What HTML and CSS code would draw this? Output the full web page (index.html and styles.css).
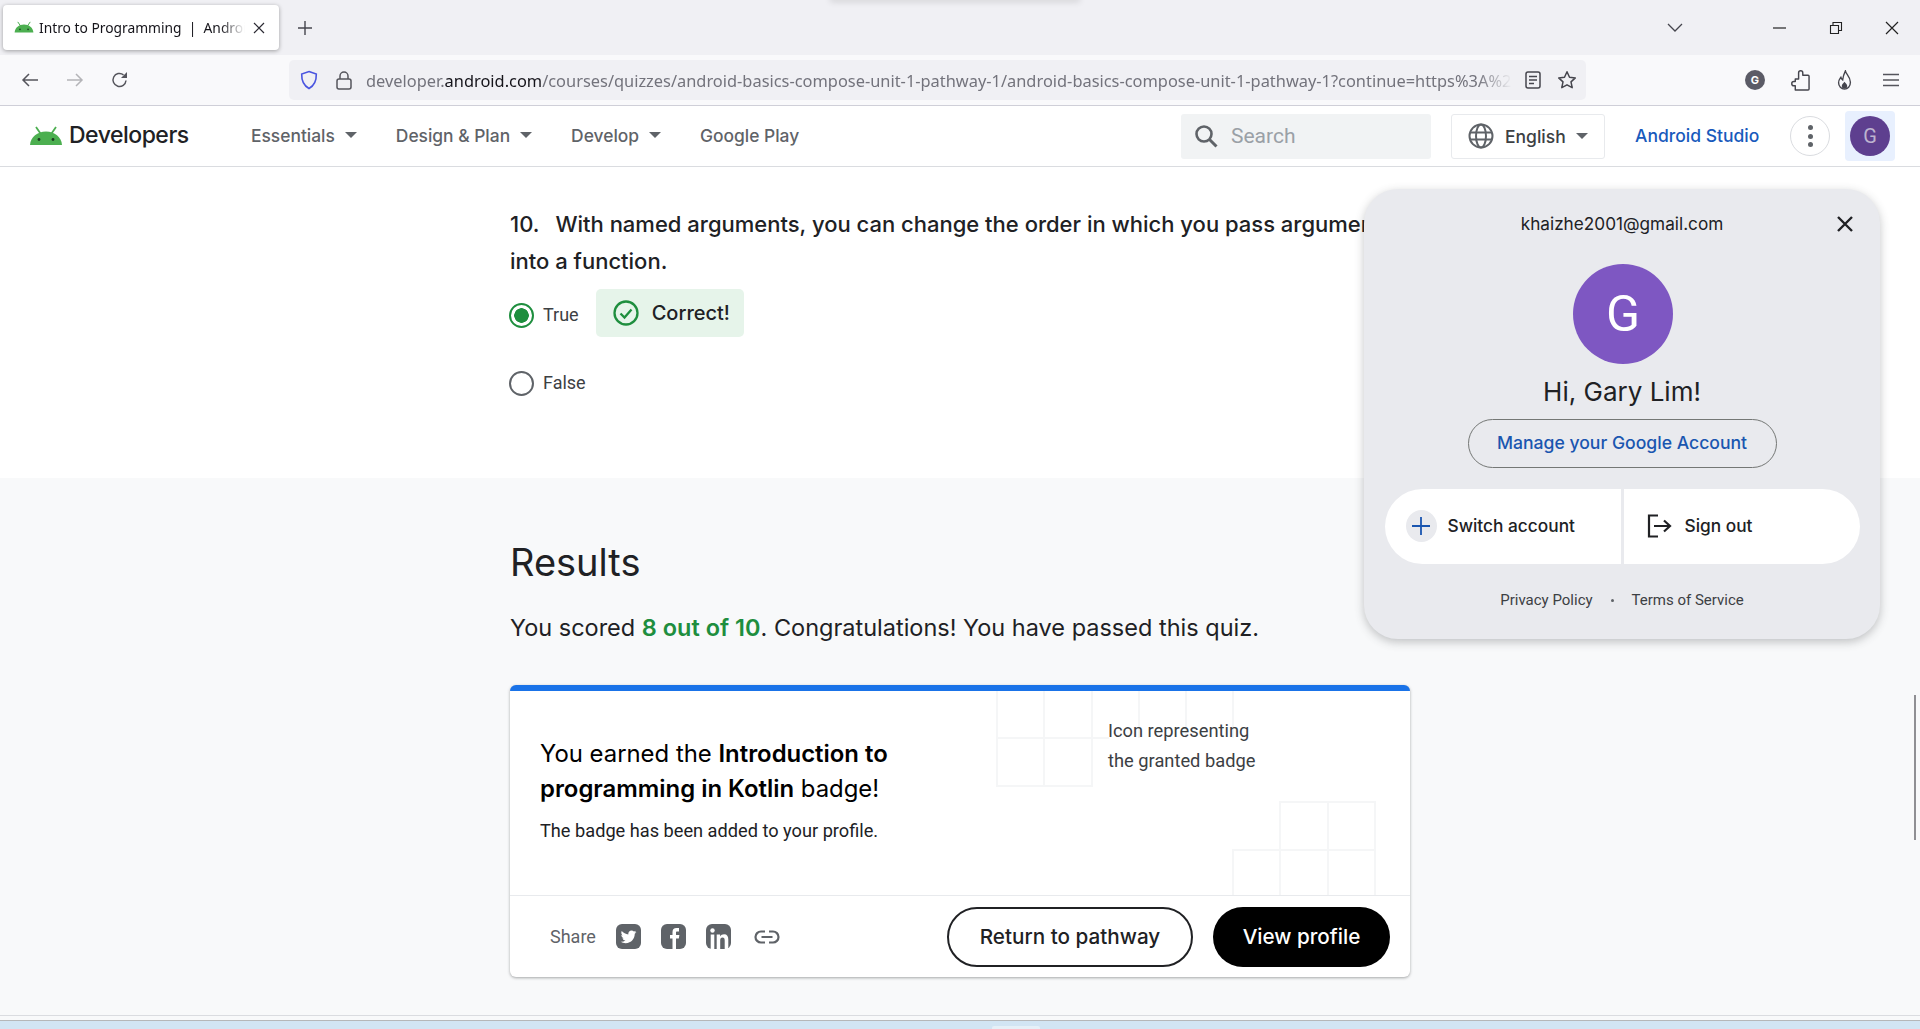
FILE: index.html
```html
<!DOCTYPE html>
<html lang="en">
<head>
    <meta charset="UTF-8">
    <title>Intro to Programming | Android Developers</title>
    <link rel="stylesheet" href="styles.css">
</head>
<body>
    <div class="tabbar">
        <div class="tab">
            <svg class="tab-icon" viewBox="0 0 32 20"><path d="M6 1l4.500 6.500M26 1l-4.500 6.500" stroke="#4caf50" stroke-width="1.600" fill="none"/><path d="M1 18C1.500 10 8 5 16 5s14.500 5 15 13z" fill="#4caf50"/><circle cx="9.500" cy="13" r="1.300" fill="#1b3a20"/><circle cx="22.500" cy="13" r="1.300" fill="#1b3a20"/></svg>
            <span class="tab-title">Intro to Programming&nbsp; |&nbsp; Android Developers</span>
            <svg class="tab-close" viewBox="0 0 12 12"><path d="M1 1l10 10M11 1L1 11" stroke="#2b2a33" stroke-width="1.200"/></svg>
        </div>
        <svg class="new-tab" viewBox="0 0 16 16"><path d="M8 1v14M1 8h14" stroke="#45454d" stroke-width="1.400"/></svg>
        <div class="tabbar-spacer"></div>
        <svg class="tab-list" viewBox="0 0 16 10"><path d="M1 1l7 7 7-7" stroke="#45454d" stroke-width="1.300" fill="none"/></svg>
        <div class="win-btn"><svg viewBox="0 0 14 14"><path d="M0 7h13" stroke="#222" stroke-width="1.200"/></svg></div>
        <div class="win-btn"><svg viewBox="0 0 14 14"><path d="M1.500 4.500h8v8h-8zM4 4.500V1.500h8.500v8h-3" stroke="#222" stroke-width="1.100" fill="none"/></svg></div>
        <div class="win-btn"><svg viewBox="0 0 14 14"><path d="M1 1l12 12M13 1L1 13" stroke="#222" stroke-width="1.200"/></svg></div>
    </div>

    <div class="toolbar">
        <svg class="nav-btn" viewBox="0 0 18 16"><path d="M17 8H2M8 2L2 8l6 6" stroke="#55555c" stroke-width="1.500" fill="none"/></svg>
        <svg class="nav-btn" viewBox="0 0 18 16"><path d="M1 8h15M10 2l6 6-6 6" stroke="#b4b4b8" stroke-width="1.500" fill="none"/></svg>
        <svg class="nav-btn" viewBox="0 0 18 18"><path d="M15 9.500A6.500 6.500 0 1 1 12.500 3.800" stroke="#55555c" stroke-width="1.500" fill="none"/><path d="M16 1v6h-6z" fill="#55555c"/></svg>
        <div class="urlbar">
            <svg class="shield" viewBox="0 0 18 20"><path d="M9 1.500l7.300 2.500c.2 6.500-1.800 11.500-7.300 14.500C3.500 15.500 1.500 10.500 1.700 4z" stroke="#4a55e0" stroke-width="1.600" fill="none"/></svg>
            <svg class="lock" viewBox="0 0 16 20"><path d="M4 9V6a4 4 0 0 1 8 0v3" stroke="#55555c" stroke-width="1.500" fill="none"/><rect x="1" y="9" width="14" height="10" rx="2" stroke="#55555c" stroke-width="1.500" fill="none"/></svg>
            <div class="url"><span class="url-dim">developer.</span>android.com<span class="url-dim">/courses/quizzes/android-basics-compose-unit-1-pathway-1/android-basics-compose-unit-1-pathway-1?continue=https%3A%2F%2Fdeveloper.android.com</span></div>
            <svg class="reader" viewBox="0 0 16 18"><rect x="1" y="1" width="14" height="16" rx="2" stroke="#45454d" stroke-width="1.500" fill="none"/><path d="M4 5.500h8M4 9h8M4 12.500h5" stroke="#45454d" stroke-width="1.400"/></svg>
            <svg class="star" viewBox="0 0 20 20"><path d="M10 1.800l2.500 5.400 5.800.7-4.300 4 1.200 5.800L10 14.800l-5.200 2.900L6 11.900l-4.300-4 5.800-.7z" stroke="#45454d" stroke-width="1.500" fill="none" stroke-linejoin="round"/></svg>
        </div>
        <div class="ext-badge">G</div>
        <svg class="ext-puzzle" viewBox="0 0 20 22"><path d="M8 5.500V3a2.200 2.200 0 0 1 4.400 0v2.500H18a1 1 0 0 1 1 1V20a1 1 0 0 1-1 1H4.500v-4.500H3a2.200 2.200 0 0 1 0-4.400h1.500V9.500H8z" stroke="#45454d" stroke-width="1.500" fill="none" stroke-linejoin="round"/></svg>
        <svg class="ext-flame" viewBox="0 0 16 22"><path d="M9 1c.5 3.500 5.500 6 5.500 12.500C14.500 18 11.500 21 8 21s-6.500-3-6.500-7c0-3 1.500-4.500 2.500-6 .5 1.500 1 2.300 2 3C6.500 7 7.500 4 9 1z" stroke="#45454d" stroke-width="1.500" fill="none"/><path d="M8 13c1 1.500 3 2.500 3 4.500a3 3 0 0 1-6 0c0-2 2-3 3-4.500z" fill="#45454d"/></svg>
        <svg class="menu" viewBox="0 0 16 14"><path d="M0 1.500h16M0 7h16M0 12.500h16" stroke="#55555c" stroke-width="1.500"/></svg>
    </div>

    <header class="site-header">
        <svg class="logo" viewBox="0 0 32 20"><path d="M6 1l4.500 6.500M26 1l-4.500 6.500" stroke="#4caf50" stroke-width="1.800" fill="none"/><path d="M0 19C.5 11 7.500 5.500 16 5.500S31.500 11 32 19z" fill="#4caf50"/><circle cx="9" cy="13.500" r="1.400" fill="#1b3a20"/><circle cx="23" cy="13.500" r="1.400" fill="#1b3a20"/></svg>
        <div class="brand">Developers</div>
        <nav class="site-nav">
            <a class="nav-link">Essentials<i class="caret"></i></a>
            <a class="nav-link">Design &amp; Plan<i class="caret"></i></a>
            <a class="nav-link">Develop<i class="caret"></i></a>
            <a class="nav-link">Google Play</a>
        </nav>
        <div class="search">
            <svg viewBox="0 0 24 24"><circle cx="10" cy="10" r="7.500" stroke="#5f6368" stroke-width="2.600" fill="none"/><path d="M15.500 15.500l7 7" stroke="#5f6368" stroke-width="3"/></svg>
            <span>Search</span>
        </div>
        <div class="lang">
            <svg viewBox="0 0 26 26"><circle cx="13" cy="13" r="11.500" stroke="#5f6368" stroke-width="2" fill="none"/><ellipse cx="13" cy="13" rx="5" ry="11.500" stroke="#5f6368" stroke-width="2" fill="none"/><path d="M2 9.500h22M2 16.500h22" stroke="#5f6368" stroke-width="2"/></svg>
            <span>English</span><i class="caret"></i>
        </div>
        <a class="studio">Android Studio</a>
        <div class="more"><i></i><i></i><i></i></div>
        <div class="user-wrap"><div class="user">G</div></div>
    </header>

    <main class="page">
        <section class="quiz">
            <p class="question"><span class="q-num">10.</span>With named arguments, you can change the order in which you pass arguments<br>into a function.</p>
            <div class="option">
                <span class="radio radio-on"></span>
                <span class="option-label">True</span>
                <div class="feedback">
                    <svg viewBox="0 0 26 26"><circle cx="13" cy="13" r="11.500" stroke="#1e8e3e" stroke-width="2.300" fill="none"/><path d="M7.500 13.500l4 4 7-8" stroke="#1e8e3e" stroke-width="2.300" fill="none"/></svg>
                    <span>Correct!</span>
                </div>
            </div>
            <div class="option option-last">
                <span class="radio"></span>
                <span class="option-label">False</span>
            </div>
        </section>

        <section class="results">
            <h1>Results</h1>
            <p class="score">You scored <b>8 out of 10</b>. Congratulations! You have passed this quiz.</p>
            <div class="card">
                <svg class="card-grid" viewBox="0 0 900 205">
                    <path d="M487 0v95h95V0M534 0v95M487 47h112M629 0v47M676 0v47M723 0v47"/>
                    <path d="M723 205V159H865M770 205V111H865V205M818 111V205"/>
                </svg>
                <div class="card-body">
                    <div class="card-text">
                        <h2>You earned the <b>Introduction to programming in Kotlin</b> badge!</h2>
                        <p>The badge has been added to your profile.</p>
                    </div>
                    <div class="badge-alt">Icon representing<br>the granted badge</div>
                </div>
                <div class="card-foot">
                    <span class="share">Share</span>
                    <svg class="share-icon" viewBox="0 0 25 25"><rect width="25" height="25" rx="6" fill="#5f6368"/><path transform="translate(3.500 3.500) scale(.75)" d="M22.460 6c-.77.35-1.600.58-2.460.69.88-.53 1.560-1.370 1.880-2.380-.83.5-1.750.85-2.720 1.050C18.370 4.500 17.260 4 16 4c-2.350 0-4.270 1.920-4.270 4.290 0 .34.04.67.11.98C8.280 9.090 5.110 7.380 3 4.790c-.37.63-.58 1.370-.58 2.150 0 1.490.75 2.810 1.910 3.560-.71 0-1.370-.2-1.950-.5v.03c0 2.080 1.480 3.820 3.440 4.210a4.220 4.220 0 0 1-1.930.07 4.280 4.280 0 0 0 4 2.980 8.520 8.520 0 0 1-5.330 1.840c-.34 0-.68-.02-1.020-.06C3.440 20.290 5.700 21 8.120 21 16 21 20.330 14.460 20.330 8.790c0-.19 0-.37-.01-.56.84-.6 1.560-1.360 2.140-2.230z" fill="#fff"/></svg>
                    <svg class="share-icon" viewBox="0 0 25 25"><rect width="25" height="25" rx="6" fill="#5f6368"/><path d="M18 4h-2.500A4 4 0 0 0 11.500 8v3H9v3.500h2.500V25H15V14.500h2.800l.6-3.500H15V8.500c0-.7.4-1 1-1h2z" fill="#fff"/></svg>
                    <svg class="share-icon" viewBox="0 0 25 25"><rect width="25" height="25" rx="6" fill="#5f6368"/><circle cx="6.500" cy="6.500" r="2.200" fill="#fff"/><path d="M4.700 10.500h3.600V25H4.700zM10.700 10.500h3.400v2c.8-1.400 2.200-2.300 4-2.300 3 0 4.200 2 4.200 5.300V25h-3.600v-8.500c0-1.800-.6-3-2.200-3-1.700 0-2.300 1.300-2.300 3V25h-3.500z" fill="#fff"/></svg>
                    <svg class="link-icon" viewBox="0 0 26 14"><path d="M11 1.500H7a5.500 5.500 0 0 0 0 11h4M15 1.500h4a5.500 5.500 0 0 1 0 11h-4M7.500 7h11" stroke="#5f6368" stroke-width="2.200" fill="none"/></svg>
                    <div class="foot-spacer"></div>
                    <a class="btn btn-outline">Return to pathway</a>
                    <a class="btn btn-dark">View profile</a>
                </div>
            </div>
        </section>
    </main>

    <div class="page-end"></div>
    <div class="taskbar"><span class="task-tab"></span></div>

    <aside class="account">
        <div class="account-mail">khaizhe2001@gmail.com</div>
        <svg class="account-close" viewBox="0 0 18 18"><path d="M2 2l14 14M16 2L2 16" stroke="#202124" stroke-width="2.400"/></svg>
        <div class="account-avatar">G</div>
        <div class="account-hi">Hi, Gary Lim!</div>
        <a class="account-manage">Manage your Google Account</a>
        <div class="account-actions">
            <a class="action action-left">
                <span class="plus"><svg viewBox="0 0 18 18"><path d="M9 0v18M0 9h18" stroke="#1a56b0" stroke-width="1.800"/></svg></span>
                Switch account
            </a>
            <a class="action action-right">
                <svg class="signout" viewBox="0 0 25 24"><path d="M11 1.500H2v21h9" stroke="#202124" stroke-width="2.200" fill="none"/><path d="M7 12h16M17 6.500l6 5.500-6 5.500" stroke="#202124" stroke-width="2.200" fill="none"/></svg>
                Sign out
            </a>
        </div>
        <div class="account-foot">
            <a>Privacy Policy</a><i></i><a>Terms of Service</a>
        </div>
    </aside>

    <div class="scroll-thumb"></div>
</body>
</html>
```
FILE: styles.css
```css
* {
    box-sizing: border-box;
}
body {
    margin: 0;
    width: 1920px;
    height: 1029px;
    overflow: hidden;
    display: flex;
    flex-direction: column;
    position: relative;
    font-family: Inter, "Liberation Sans", sans-serif;
    color: #202124;
    background-color: #fff;
}
svg {
    display: block;
    flex-shrink: 0;
}

/* browser tab strip */
.tabbar {
    position: relative;
    height: 55px;
    display: flex;
    align-items: center;
    padding-left: 3px;
    background-color: #f0f0f4;
}
.tabbar::before {
    content: "";
    position: absolute;
    left: 830px;
    top: -6px;
    width: 250px;
    height: 6px;
    box-shadow: 0 2px 6px rgba(0, 0, 0, 0.12);
}
.tab {
    width: 276px;
    height: 45px;
    display: flex;
    align-items: center;
    padding-left: 11px;
    background-color: #fff;
    border-radius: 4px;
    box-shadow: 0 1px 4px rgba(0, 0, 0, 0.35);
}
.tab-icon {
    width: 20px;
    height: 13px;
}
.tab-title {
    width: 206px;
    margin-left: 5px;
    overflow: hidden;
    white-space: nowrap;
    font-family: "Noto Sans", sans-serif;
    font-size: 13.800px;
    color: #15141a;
    -webkit-mask-image: linear-gradient(to right, #000 88%, transparent);
    mask-image: linear-gradient(to right, #000 88%, transparent);
}
.tab-close {
    width: 12px;
    height: 12px;
    margin-left: 8px;
}
.new-tab {
    width: 16px;
    height: 16px;
    margin-left: 18px;
}
.tabbar-spacer {
    flex: 1;
}
.tab-list {
    width: 16px;
    height: 10px;
    margin-right: 69px;
}
.win-btn {
    width: 56px;
    display: flex;
    justify-content: center;
}
.win-btn svg {
    width: 14px;
    height: 14px;
}

/* address bar row */
.toolbar {
    height: 51px;
    display: flex;
    align-items: center;
    padding-left: 21px;
    background-color: #f9f9fb;
    border-bottom: 1px solid #cfcfd8;
}
.nav-btn {
    width: 18px;
    height: 18px;
    margin-right: 27px;
}
.urlbar {
    width: 1297px;
    height: 40px;
    margin-left: 133px;
    display: flex;
    align-items: center;
    padding-left: 11px;
    background-color: #f0f0f4;
    border-radius: 5px;
}
.shield {
    width: 18px;
    height: 20px;
}
.lock {
    width: 16px;
    height: 20px;
    margin-left: 18px;
}
.url {
    width: 1146px;
    margin-left: 14px;
    overflow: hidden;
    white-space: nowrap;
    font-family: "Noto Sans", sans-serif;
    font-size: 16.400px;
    color: #15141a;
    -webkit-mask-image: linear-gradient(to right, #000 97%, transparent);
    mask-image: linear-gradient(to right, #000 97%, transparent);
}
.url-dim {
    color: #73737c;
}
.reader {
    width: 16px;
    height: 18px;
    margin-left: 13px;
}
.star {
    width: 20px;
    height: 20px;
    margin-left: 16px;
}
.ext-badge {
    width: 20px;
    height: 20px;
    margin-left: 159px;
    border-radius: 50%;
    background-color: #5b5b66;
    color: #fff;
    font-size: 11px;
    font-weight: 700;
    line-height: 20px;
    text-align: center;
}
.ext-puzzle {
    width: 19px;
    height: 21px;
    margin-left: 26px;
}
.ext-flame {
    width: 15px;
    height: 20px;
    margin-left: 27px;
}
.menu {
    width: 16px;
    height: 14px;
    margin-left: 31px;
}

/* developers site header */
.site-header {
    height: 61px;
    display: flex;
    align-items: center;
    padding-left: 30px;
    background-color: #fff;
    border-bottom: 1px solid #dadce0;
}
.logo {
    width: 32px;
    height: 20px;
}
.brand {
    margin-left: 7px;
    margin-bottom: 2px;
    width: 121px;
    font-size: 23px;
    font-weight: 500;
    letter-spacing: -0.5px;
    color: #202124;
}
.site-nav {
    display: flex;
    align-items: center;
    margin-left: 61px;
    margin-bottom: 2px;
    width: 930px;
}
.nav-link {
    display: flex;
    align-items: center;
    margin-right: 39px;
    font-size: 17.400px;
    font-weight: 500;
    color: #5f6368;
}
.caret {
    display: block;
    width: 0;
    height: 0;
    margin-left: 10px;
    border-left: 6px solid transparent;
    border-right: 6px solid transparent;
    border-top: 6px solid #5f6368;
}
.search {
    width: 250px;
    height: 45px;
    display: flex;
    align-items: center;
    padding-left: 13px;
    background-color: #f1f3f4;
    border-radius: 3px;
    font-family: Roboto, sans-serif;
    font-size: 21px;
    color: #9aa0a6;
}
.search svg {
    width: 24px;
    height: 24px;
    margin-right: 13px;
}
.lang {
    width: 154px;
    height: 45px;
    margin-left: 20px;
    display: flex;
    align-items: center;
    padding-left: 16px;
    border: 1px solid #e8eaed;
    border-radius: 3px;
    font-size: 17.500px;
    font-weight: 500;
    color: #3c4043;
}
.lang svg {
    width: 26px;
    height: 26px;
    margin-right: 11px;
}
.studio {
    margin-left: 30px;
    margin-bottom: 1px;
    width: 155px;
    font-size: 17.500px;
    font-weight: 500;
    color: #185abc;
    white-space: nowrap;
}
.more {
    width: 40px;
    height: 40px;
    display: flex;
    flex-direction: column;
    align-items: center;
    justify-content: center;
    gap: 3.500px;
    border: 1px solid #dadce0;
    border-radius: 50%;
}
.more i {
    width: 5px;
    height: 5px;
    border-radius: 50%;
    background-color: #5f6368;
}
.user-wrap {
    width: 50px;
    height: 50px;
    margin-left: 15px;
    display: flex;
    align-items: center;
    justify-content: center;
    background-color: #e8f0fe;
    border-radius: 4px;
}
.user {
    width: 40px;
    height: 40px;
    border-radius: 50%;
    background-color: #5e3f8f;
    color: #bdb3cf;
    font-family: Roboto, sans-serif;
    font-size: 20px;
    line-height: 40px;
    text-align: center;
}

/* page */
.page {
    height: 848px;
    display: flex;
    flex-direction: column;
}
.quiz {
    height: 311px;
    padding: 39px 0 0 509px;
    background-color: #fff;
}
.question {
    margin: 0 0 0 1px;
    width: 900px;
    font-size: 22px;
    font-weight: 500;
    line-height: 37px;
    white-space: nowrap;
}
.q-num {
    margin-right: 16px;
}
.option {
    height: 48px;
    margin-top: 11px;
    display: flex;
    align-items: center;
}
.option-last {
    margin-top: 20px;
}
.radio {
    width: 25px;
    height: 25px;
    border: 2px solid #5f6368;
    border-radius: 50%;
}
.radio-on {
    border-color: #1e8e3e;
    background: radial-gradient(circle, #1e8e3e 0 7px, #fff 7.500px);
}
.option-label {
    margin-left: 9px;
    margin-bottom: 2px;
    font-family: Roboto, sans-serif;
    font-size: 18px;
    color: #3c4043;
}
.feedback {
    width: 148px;
    height: 48px;
    margin: 0 0 4px 17px;
    display: flex;
    align-items: center;
    padding: 0 0 1px 17px;
    background-color: #e6f4ea;
    border-radius: 5px;
    font-size: 20px;
    font-weight: 500;
}
.feedback svg {
    width: 26px;
    height: 26px;
    margin-right: 13px;
}
.results {
    flex: 1;
    padding: 62px 0 0 510px;
    background-color: #f8f9fa;
}
.results h1 {
    margin: 0;
    font-size: 38px;
    font-weight: 400;
    line-height: 44px;
}
.score {
    margin: 26px 0 0;
    font-size: 23.500px;
    line-height: 36px;
}
.score b {
    font-weight: 600;
    color: #1e8e3e;
}
.card {
    position: relative;
    width: 900px;
    height: 292px;
    margin-top: 39px;
    display: flex;
    flex-direction: column;
    background-color: #fff;
    border-top: 6px solid #1a73e8;
    border-radius: 6px;
    box-shadow: 0 1px 3px rgba(60, 64, 67, 0.45);
}
.card-grid {
    position: absolute;
    left: 0;
    top: 0;
    width: 900px;
    height: 205px;
}
.card-grid path {
    fill: none;
    stroke: #f5f6f7;
    stroke-width: 2;
}
.card-body {
    position: relative;
    height: 205px;
    display: flex;
    padding-left: 30px;
    border-bottom: 1px solid #e8eaed;
}
.card-text {
    width: 568px;
    padding-top: 45px;
}
.card-text h2 {
    margin: 0;
    width: 360px;
    font-size: 23.900px;
    font-weight: 400;
    line-height: 35px;
    color: #000;
}
.card-text b {
    font-weight: 600;
}
.card-text p {
    margin: 13px 0 0;
    font-family: Roboto, sans-serif;
    font-size: 18.200px;
    line-height: 24px;
}
.badge-alt {
    padding-top: 25px;
    font-family: Roboto, sans-serif;
    font-size: 18.300px;
    line-height: 30px;
    color: #3c4043;
}
.card-foot {
    flex: 1;
    display: flex;
    align-items: center;
    padding: 0 20px 0 40px;
}
.share {
    width: 66px;
    font-family: Roboto, sans-serif;
    font-size: 18px;
    color: #5f6368;
}
.share-icon {
    width: 25px;
    height: 25px;
    margin-right: 20px;
}
.link-icon {
    width: 26px;
    height: 14px;
    margin-left: 3px;
}
.foot-spacer {
    flex: 1;
}
.btn {
    height: 60px;
    display: flex;
    align-items: center;
    justify-content: center;
    border-radius: 30px;
    font-size: 20.700px;
    font-weight: 500;
}
.btn-outline {
    width: 246px;
    border: 2px solid #202124;
    color: #202124;
}
.btn-dark {
    width: 177px;
    margin-left: 20px;
    background-color: #000;
    color: #fff;
}
.page-end {
    height: 5px;
    background-color: #f8f9fa;
    border-top: 1px solid #dadce0;
}
.taskbar {
    flex: 1;
    position: relative;
    background-color: #d2e5f4;
    border-top: 1px solid #b5b7b9;
}
.task-tab {
    position: absolute;
    left: 992px;
    top: 5px;
    width: 48px;
    height: 4px;
    background-color: #e6f0f8;
    border-radius: 2px 2px 0 0;
}

/* google account popup */
.account {
    position: absolute;
    left: 1364px;
    top: 189px;
    width: 516px;
    height: 450px;
    display: flex;
    flex-direction: column;
    align-items: center;
    padding-top: 24px;
    background-color: #e9eaee;
    border-radius: 34px;
    box-shadow: 0 3px 10px rgba(60, 64, 67, 0.3);
}
.account-mail {
    font-size: 17.200px;
    line-height: 22px;
}
.account-close {
    position: absolute;
    right: 26px;
    top: 26px;
    width: 18px;
    height: 18px;
}
.account-avatar {
    width: 100px;
    height: 100px;
    margin-top: 29px;
    margin-left: 2px;
    border-radius: 50%;
    background-color: #7e57c2;
    color: #fff;
    font-family: Roboto, sans-serif;
    font-size: 50px;
    line-height: 100px;
    text-align: center;
}
.account-hi {
    margin-top: 10px;
    font-size: 26px;
    line-height: 36px;
}
.account-manage {
    width: 309px;
    height: 49px;
    margin-top: 9px;
    border: 1px solid #747775;
    border-radius: 25px;
    font-size: 17.600px;
    font-weight: 500;
    line-height: 46px;
    text-align: center;
    color: #1a56b0;
}
.account-actions {
    width: 475px;
    height: 75px;
    margin-top: 21px;
    display: flex;
    gap: 3px;
}
.action {
    display: flex;
    align-items: center;
    padding-bottom: 2px;
    background-color: #fff;
    font-size: 17.300px;
    font-weight: 500;
}
.action-left {
    width: 236px;
    padding-left: 21px;
    border-radius: 38px 0 0 38px;
}
.action-right {
    width: 236px;
    padding-left: 23px;
    border-radius: 0 38px 38px 0;
}
.plus {
    width: 31px;
    height: 32px;
    margin-right: 11px;
    display: flex;
    align-items: center;
    justify-content: center;
    border-radius: 50%;
    background-color: #e9eaee;
}
.plus svg {
    width: 18px;
    height: 18px;
}
.signout {
    width: 25px;
    height: 24px;
    margin-right: 13px;
}
.account-foot {
    margin-top: 26px;
    display: flex;
    align-items: center;
    font-family: Roboto, sans-serif;
    font-size: 15px;
    line-height: 20px;
    color: #3c4043;
}
.account-foot i {
    width: 3px;
    height: 3px;
    margin: 0 18px;
    background-color: #5f6368;
    border-radius: 50%;
}
.scroll-thumb {
    position: absolute;
    left: 1914px;
    top: 695px;
    width: 2px;
    height: 145px;
    background-color: #8f8f93;
}
```
